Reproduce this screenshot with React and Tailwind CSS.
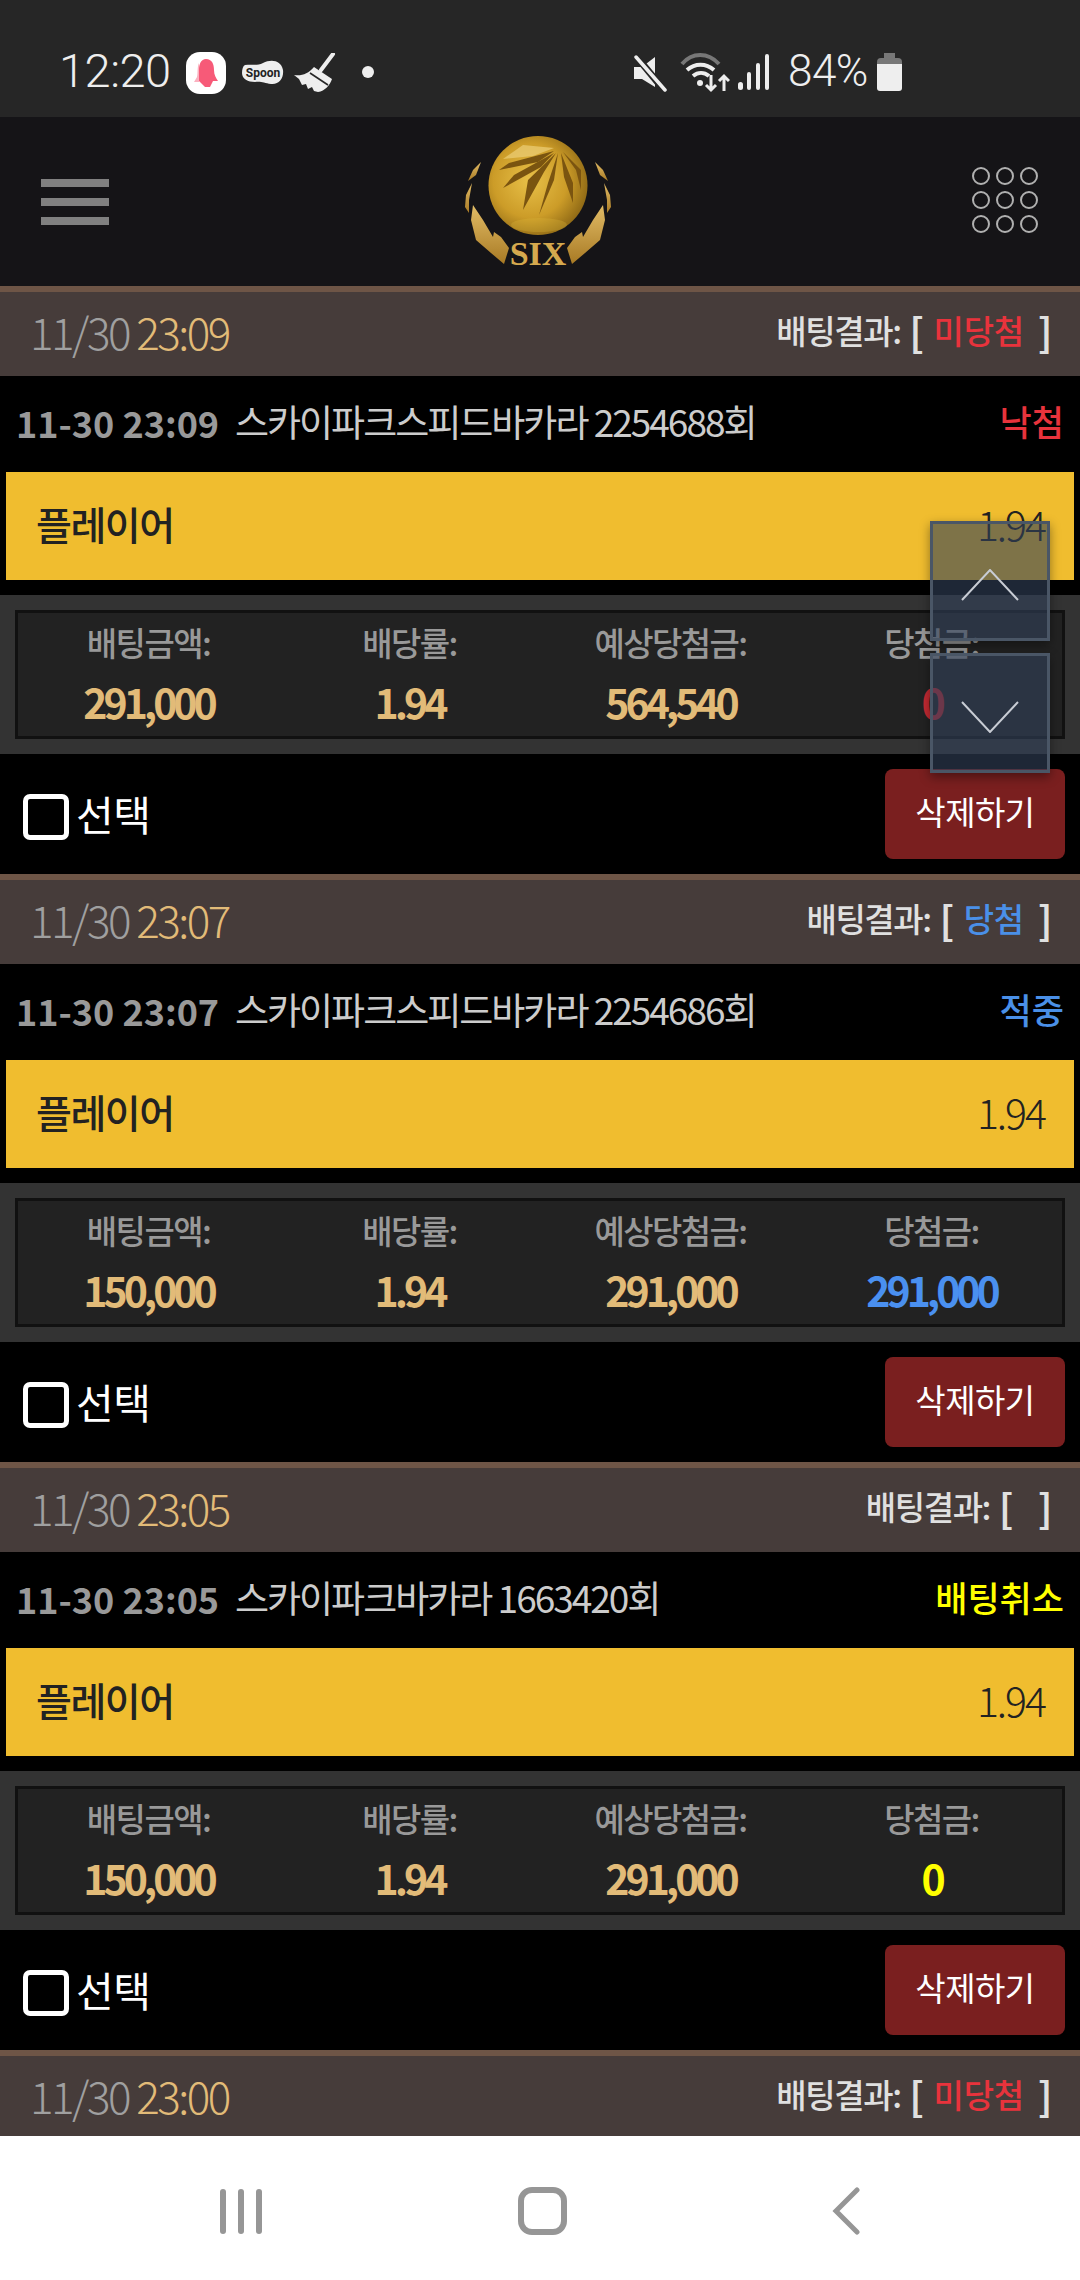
import React from "react";

const KR = "font-['Noto_Sans_CJK_KR','Noto_Sans',sans-serif]";

const bets = [
  {
    date: "11/30",
    time: "23:09",
    result: "미당첨",
    resultColor: "text-[#e8333c]",
    stamp: "11-30 23:09",
    game: "스카이파크스피드바카라 2254688회",
    status: "낙첨",
    statusColor: "text-[#e8333c]",
    amount: "291,000",
    expect: "564,540",
    win: "0",
    winColor: "text-[#c42a32]",
  },
  {
    date: "11/30",
    time: "23:07",
    result: "당첨",
    resultColor: "text-[#4a90e8]",
    stamp: "11-30 23:07",
    game: "스카이파크스피드바카라 2254686회",
    status: "적중",
    statusColor: "text-[#4a90e8]",
    amount: "150,000",
    expect: "291,000",
    win: "291,000",
    winColor: "text-[#4a90f0]",
  },
  {
    date: "11/30",
    time: "23:05",
    result: "",
    resultColor: "",
    stamp: "11-30 23:05",
    game: "스카이파크바카라 1663420회",
    status: "배팅취소",
    statusColor: "text-[#ffff00]",
    amount: "150,000",
    expect: "291,000",
    win: "0",
    winColor: "text-[#ffff00]",
  },
];

function StatusBar() {
  return (
    <div className="h-[117px] shrink-0 bg-[#262626] flex items-start pt-[50px] pl-[59px] text-[#eeeeee]">
      <span className="font-['Roboto',sans-serif] font-light text-[47px] leading-[42px] tracking-[-0.5px] w-[126px]">12:20</span>
      <svg width="42" height="44" viewBox="0 0 42 44" className="mt-[1px]">
        <rect x="1" y="1" width="40" height="42" rx="14" fill="#fff" />
        <path d="M21 8c6 0 8 5 8 11 0 5 2 8 4 11H12c2-3 2-6 2-11 0-6 2-11 7-11z" fill="#f75a78" />
        <path d="M14 30h14l-3 6h-5z" fill="#f75a78" />
        <path d="M14 12c-2 4-1 10-2 14l-3 5h5z" fill="#fbb1c0" />
      </svg>
      <svg width="44" height="30" viewBox="0 0 44 30" className="ml-[14px] mt-[8px]">
        <path d="M4 7c8-1 12 1 18-2 8-4 18-3 20 7 1 8-4 15-12 14-7-1-10-3-16-2-7 0-13-3-13-9 0-4 1-7 3-8z" fill="#eee" />
        <text x="22" y="19" textAnchor="middle" fontSize="12" fontWeight="700" fill="#222" className="font-['Roboto',sans-serif]">Spoon</text>
      </svg>
      <svg width="44" height="40" viewBox="0 0 44 40" className="ml-[8px] mt-[3px]">
        <path d="M40 1L28 17" stroke="#eee" strokeWidth="4" strokeLinecap="round" />
        <path d="M21 14l18 12c-2 6-7 12-14 13l-4-1-2-4-4 2-2-5-4 1-3-6-5-4c8 1 14-1 20-8z" fill="#eee" />
        <path d="M17 20l18 12" stroke="#262626" strokeWidth="1.6" />
      </svg>
      <span className="w-[12px] h-[12px] rounded-full bg-[#eee] ml-[25px] mt-[16px]" />
      <div className="flex-1" />
      <svg width="36" height="38" viewBox="0 0 36 38" className="mt-[4px]">
        <path d="M2 13h8l13-10v30L10 25H2z" fill="#eee" />
        <path d="M4 2l28 34" stroke="#262626" strokeWidth="7" />
        <path d="M4 3l29 33" stroke="#eee" strokeWidth="3.5" strokeLinecap="round" />
      </svg>
      <svg width="50" height="42" viewBox="0 0 50 42" className="ml-[12px] mt-[1px]">
        <path d="M2 13C12 1 28 1 39 13" fill="none" stroke="#777" strokeWidth="4" />
        <path d="M7 19c8-7 19-7 27 0" fill="none" stroke="#eee" strokeWidth="4" />
        <path d="M13 25c5-4 11-4 16 0" fill="none" stroke="#eee" strokeWidth="4" />
        <circle cx="20" cy="32" r="3" fill="#eee" />
        <path d="M31 24v15M26 34l5 5 5-5" fill="none" stroke="#eee" strokeWidth="3" />
        <path d="M44 40V25M39 30l5-5 5 5" fill="none" stroke="#eee" strokeWidth="3" />
      </svg>
      <svg width="32" height="36" viewBox="0 0 32 36" className="ml-[8px] mt-[4px]">
        <rect x="0" y="28" width="5" height="8" rx="2.5" fill="#eee" />
        <rect x="9" y="18" width="4" height="18" rx="2" fill="#eee" />
        <rect x="18" y="9" width="4" height="27" rx="2" fill="#eee" />
        <rect x="27" y="0" width="4" height="36" rx="2" fill="#eee" />
      </svg>
      <span className="font-['Roboto',sans-serif] font-light text-[44px] leading-[42px] ml-[18px] w-[90px] tracking-[-0.5px]">84%</span>
      <svg width="25" height="38" viewBox="0 0 25 38" className="mt-[3px] mr-[178px] ml-[-1px]">
        <path d="M7 0h11v5h3a4 4 0 0 1 4 4v4H0V9a4 4 0 0 1 4-4h3z" fill="#777" />
        <path d="M0 11h25v24a3 3 0 0 1-3 3H3a3 3 0 0 1-3-3z" fill="#eee" />
      </svg>
    </div>
  );
}

function Wings() {
  return (
    <g fill="url(#wing)">
      <path d="M18 27L10 35 5 46 13 40z" />
      <path d="M9 48L3 60 2 72 6 78 6 65z" />
      <path d="M10 70L8 85 13 105 28 118 41 129 46 113 38 102 31 97 30 102 20 85z" />
    </g>
  );
}

function Logo() {
  return (
    <svg width="150" height="138" viewBox="0 0 150 138">
      <defs>
        <radialGradient id="ball" cx="0.42" cy="0.45" r="0.62">
          <stop offset="0" stopColor="#e8c048" />
          <stop offset="0.6" stopColor="#cc9c28" />
          <stop offset="1" stopColor="#8a6514" />
        </radialGradient>
        <linearGradient id="wing" x1="0" y1="0" x2="0" y2="1">
          <stop offset="0" stopColor="#e2bc66" />
          <stop offset="1" stopColor="#a87a24" />
        </linearGradient>
      </defs>
      <circle cx="75" cy="50.5" r="49.5" fill="url(#ball)" />
      <ellipse cx="76" cy="90" rx="28" ry="7" fill="#e4c040" opacity="0.25" />
      <g fill="#7a5410">
        <path d="M91 16L46 28 36 35 75 27z" />
        <path d="M91 18L51 40 40 53 78 32z" />
        <path d="M93 18L65 45 60 75 81 37z" />
        <path d="M95 18L85 48 76 80 91 45z" />
        <path d="M98 18L101 42 110 68 110 48z" />
        <path d="M100 17L113 35 118 55 118 35z" />
      </g>
      <path d="M60 10L91 13 70 21 40 24z" fill="#edcf78" opacity="0.7" />
      <Wings />
      <g transform="translate(150 0) scale(-1 1)">
        <Wings />
      </g>
      <text x="75" y="130" textAnchor="middle" fontSize="34" fontWeight="700" fill="#d5a94e" className="font-['Liberation_Serif',serif]">SIX</text>
    </svg>
  );
}

function Header() {
  return (
    <div className="h-[169px] shrink-0 bg-[#151417] flex items-start justify-between pl-[41px] pr-[42px]">
      <div className="w-[68px] flex flex-col gap-[11px] mt-[62px]">
        <div className="h-[8px] bg-[#808080]" />
        <div className="h-[8px] bg-[#808080]" />
        <div className="h-[8px] bg-[#808080]" />
      </div>
      <div className="mt-[18px] ml-[-6px]">
        <Logo />
      </div>
      <div className="grid grid-cols-3 gap-x-[6px] gap-y-[6px] mt-[50px]">
        {[0, 1, 2, 3, 4, 5, 6, 7, 8].map((i) => (
          <div key={i} className="w-[18px] h-[18px] rounded-full border-[2px] border-[#b0b0b0]" />
        ))}
      </div>
    </div>
  );
}

function SectionBar({ date, time, result, resultColor }) {
  return (
    <div className="h-[90px] bg-[#463c3a] border-t-[6px] border-[#6e5546] flex items-center justify-between pl-[30px] pr-[29px]">
      <span className="text-[44px] font-light tracking-[-2.5px] mt-[-6px]">
        <span className="text-[#a0a0a0]">{date} </span>
        <span className="text-[#e2bb78]">{time}</span>
      </span>
      <span className="flex items-center text-[33px] font-medium tracking-[-1.4px] text-[#e0e0e0] whitespace-pre mt-[-6px]">
        배팅결과:
        <span className="font-bold text-[38px] ml-[9px] leading-[40px]">[</span>
        {result ? (
          <span className={"pl-[11px] pr-[14px] tracking-[-0.2px] " + resultColor}>{result}</span>
        ) : (
          <span className="w-[26px]" />
        )}
        <span className="font-bold text-[38px] leading-[40px]">]</span>
      </span>
    </div>
  );
}

function Stat({ label, value, color }) {
  return (
    <div className="flex flex-col items-center">
      <span className="text-[33px] leading-[40px] mt-[9px] font-medium tracking-[-1.6px] text-[#999999]">{label}</span>
      <span className={"text-[41px] leading-[50px] mt-[14px] font-bold tracking-[-4px] " + color}>{value}</span>
    </div>
  );
}

function BetCard({ bet }) {
  return (
    <div className="shrink-0">
      <SectionBar date={bet.date} time={bet.time} result={bet.result} resultColor={bet.resultColor} />
      <div className="h-[96px] bg-black flex items-center justify-between pl-[16px] pr-[16px] pb-[5px]">
        <span className="flex items-center whitespace-pre">
          <span className="text-[36px] font-bold text-[#999999] tracking-[0px] w-[219px]">{bet.stamp}</span>
          <span className="text-[37px] tracking-[-2px] text-[#cccccc]">{bet.game}</span>
        </span>
        <span className={"text-[35px] font-medium tracking-[0px] " + bet.statusColor}>{bet.status}</span>
      </div>
      <div className="mx-[6px] h-[108px] bg-[#f0bd2f] flex items-center justify-between pl-[30px] pr-[29px] pb-[5px] text-[#222222]">
        <span className="text-[39px] font-medium tracking-[-1.5px]">플레이어</span>
        <span className="text-[41px] font-light tracking-[-2px]">1.94</span>
      </div>
      <div className="h-[15px] bg-black" />
      <div className="bg-[#333333] p-[15px]">
        <div className="h-[129px] bg-[#222222] border-[3px] border-[#111111] grid grid-cols-4">
          <Stat label="배팅금액:" value={bet.amount} color="text-[#e2bb78]" />
          <Stat label="배당률:" value="1.94" color="text-[#e2bb78]" />
          <Stat label="예상당첨금:" value={bet.expect} color="text-[#e2bb78]" />
          <Stat label="당첨금:" value={bet.win} color={bet.winColor} />
        </div>
      </div>
      <div className="h-[120px] bg-black flex items-center justify-between pl-[23px] pr-[15px]">
        <div className="flex items-center">
          <div className="w-[46px] h-[46px] rounded-[7px] border-[5px] border-white mt-[5px]" />
          <span className="text-[41px] tracking-[-0.5px] text-white ml-[7px]">선택</span>
        </div>
        <button className="w-[180px] h-[90px] rounded-[8px] bg-[#7a1f1f] text-white text-[33px] tracking-[-0.5px] mt-[-1px] pb-[3px]">삭제하기</button>
      </div>
    </div>
  );
}

function ScrollButton({ up }) {
  return (
    <div className="w-[120px] h-[120px] bg-[#32415a]/60 border-[3px] border-[#4a5666] flex items-center justify-center shadow-[0_4px_10px_rgba(0,0,0,0.4)]">
      <svg width="58" height="32" viewBox="0 0 58 32" className="mt-[8px]">
        <path d={up ? "M1 31L29 1l28 30" : "M1 1l28 30L57 1"} fill="none" stroke="#c8ccd4" strokeWidth="2" />
      </svg>
    </div>
  );
}

function NavBar() {
  return (
    <div className="h-[144px] shrink-0 bg-white flex items-center pt-[6px] pl-[220px]">
      <div className="flex gap-[12px] w-[298px]">
        <div className="w-[6px] h-[45px] rounded-full bg-[#969696]" />
        <div className="w-[6px] h-[45px] rounded-full bg-[#969696]" />
        <div className="w-[6px] h-[45px] rounded-full bg-[#969696]" />
      </div>
      <div className="w-[49px] h-[48px] rounded-[14px] border-[6px] border-[#969696]" />
      <svg width="30" height="48" viewBox="0 0 30 48" className="ml-[263px]">
        <path d="M27 3L6 24l21 21" fill="none" stroke="#969696" strokeWidth="5" strokeLinecap="round" />
      </svg>
    </div>
  );
}

export default function App() {
  return (
    <div className={"relative w-[1080px] h-[2280px] flex flex-col overflow-hidden bg-black " + KR}>
      <StatusBar />
      <Header />
      <div className="flex-1 min-h-0 overflow-hidden">
        {bets.map((bet) => (
          <BetCard key={bet.stamp} bet={bet} />
        ))}
        <SectionBar date="11/30" time="23:00" result="미당첨" resultColor="text-[#e8333c]" />
      </div>
      <NavBar />
      <div className="absolute left-[930px] top-[521px] flex flex-col gap-[12px]">
        <ScrollButton up />
        <ScrollButton />
      </div>
    </div>
  );
}
